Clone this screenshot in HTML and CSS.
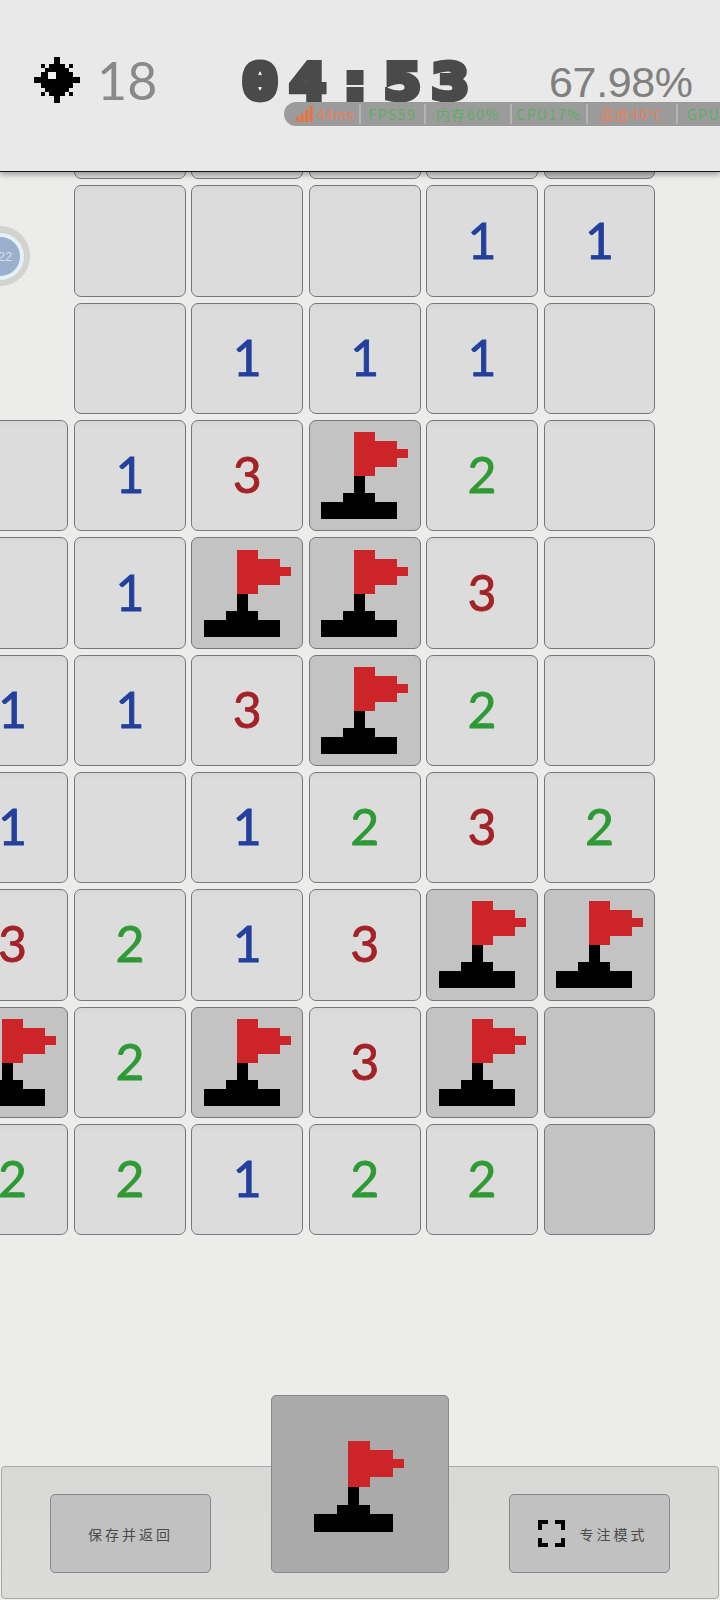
FILE: index.html
```html
<!DOCTYPE html>
<html lang="zh">
<head>
<meta charset="utf-8">
<title>Minesweeper</title>
<link rel="stylesheet" href="styles.css">
</head>
<body>
<svg class="defs" width="0" height="0" aria-hidden="true">
  <symbol id="flag" viewBox="0 0 8 10" preserveAspectRatio="none">
    <path fill="#cc2428" d="M3 0h2v1h2v1h1v1H7v1H5v1H3z"/>
    <path fill="#000" d="M3 5h1v2h1v1h2v2H0V8h2V7h1z"/>
  </symbol>
</svg>
<div class="app">
  <header class="top">
    <div class="stats">
      <div class="mines">
        <svg class="mine" viewBox="0 0 136 136" shape-rendering="crispEdges" aria-hidden="true">
          <path fill="#000" d="M60 0h16v20h16v12h12v12h12v16h20v16h-20v16h-12v12H92v12H76v20H60v-20H44v-12H32V92H20V76H0V60h20V44h12V32h12V20h16z"/>
          <path fill="#000" d="M20 20h12v12H20zM104 20h12v12h-12zM20 104h12v12H20zM104 104h12v12h-12z"/>
          <path fill="#f2f2f2" d="M40 44h24v20H40z"/>
        </svg>
        <span class="mine-count">18</span>
      </div>
      <div class="timer"><span class="timer-text">04:53</span></div>
      <div class="percent">67.98%</div>
    </div>
    <div class="perf">
      <span class="perf-item warn">
        <svg class="bars" viewBox="0 0 17 16" aria-hidden="true"><path fill="#f0703c" d="M0 11h3v5H0zM4.500 8h3v8h-3zM9 4h3v12H9zM13.500 0h3v16h-3z"/></svg>
        <span>44ms</span>
      </span>
      <span class="perf-item ok">FPS59</span>
      <span class="perf-item ok">内存60%</span>
      <span class="perf-item ok">CPU17%</span>
      <span class="perf-item warn">温度40℃</span>
      <span class="perf-item ok">GPU27%</span>
    </div>
  </header>

  <main class="board">
    <div class="grid">
      <div class="cell none"></div><div class="cell"></div><div class="cell"></div><div class="cell"></div><div class="cell"></div><div class="cell dark"></div>

      <div class="cell none"></div><div class="cell"></div><div class="cell"></div><div class="cell"></div><div class="cell n1">1</div><div class="cell n1">1</div>

      <div class="cell none"></div><div class="cell"></div><div class="cell n1">1</div><div class="cell n1">1</div><div class="cell n1">1</div><div class="cell"></div>

      <div class="cell"></div><div class="cell n1">1</div><div class="cell n3">3</div><div class="cell dark"><svg class="flag"><use href="#flag"/></svg></div><div class="cell n2">2</div><div class="cell"></div>

      <div class="cell"></div><div class="cell n1">1</div><div class="cell dark"><svg class="flag"><use href="#flag"/></svg></div><div class="cell dark"><svg class="flag"><use href="#flag"/></svg></div><div class="cell n3">3</div><div class="cell"></div>

      <div class="cell n1">1</div><div class="cell n1">1</div><div class="cell n3">3</div><div class="cell dark"><svg class="flag"><use href="#flag"/></svg></div><div class="cell n2">2</div><div class="cell"></div>

      <div class="cell n1">1</div><div class="cell"></div><div class="cell n1">1</div><div class="cell n2">2</div><div class="cell n3">3</div><div class="cell n2">2</div>

      <div class="cell n3">3</div><div class="cell n2">2</div><div class="cell n1">1</div><div class="cell n3">3</div><div class="cell dark"><svg class="flag"><use href="#flag"/></svg></div><div class="cell dark"><svg class="flag"><use href="#flag"/></svg></div>

      <div class="cell dark"><svg class="flag"><use href="#flag"/></svg></div><div class="cell n2">2</div><div class="cell dark"><svg class="flag"><use href="#flag"/></svg></div><div class="cell n3">3</div><div class="cell dark"><svg class="flag"><use href="#flag"/></svg></div><div class="cell dark"></div>

      <div class="cell n2">2</div><div class="cell n2">2</div><div class="cell n1">1</div><div class="cell n2">2</div><div class="cell n2">2</div><div class="cell dark"></div>
    </div>
    <div class="ball"><span class="ball-core"><span class="ball-text">22</span></span></div>
  </main>

  <footer class="bar">
    <button class="btn" type="button"><span class="btn-label">保存并返回</span></button>
    <button class="flag-btn" type="button"><svg class="flag-big"><use href="#flag"/></svg></button>
    <button class="btn btn-focus" type="button">
      <svg class="focus-icon" viewBox="0 0 27 27" aria-hidden="true"><path fill="none" stroke="#000" stroke-width="4" d="M10 2H2V10M17 2h8V10M2 18v7H10M25 18v7H17"/></svg>
      <span class="btn-label">专注模式</span>
    </button>
  </footer>
</div>
</body>
</html>
```
FILE: styles.css
```css
* { box-sizing: border-box; }
html, body { margin: 0; padding: 0; height: 100%; }
body { overflow: hidden; background: #ecedeb; font-family: "Liberation Sans", "Noto Sans CJK SC", sans-serif; }
.defs { position: absolute; }
.app { height: 1600px; display: flex; flex-direction: column; }

.top {
  position: relative; z-index: 2; height: 172px; flex: none;
  background: #e9e9e9; border-bottom: 1px solid #111;
  box-shadow: 0 3px 5px rgba(0,0,0,.3);
  padding-top: 57px;
}
.stats { display: flex; align-items: center; padding-left: 34px; height: 46px; }
.mines { display: flex; align-items: center; width: 207px; flex: none; }
.mine { width: 46px; height: 46px; flex: none; }
.mine-count { margin-left: 17px; font: 52px/46px Lato, sans-serif; color: #8a8a8a; }
.timer { width: 308px; flex: none; height: 46px; }
.timer-text {
  display: inline-block; transform: scaleX(1.2); transform-origin: left center;
  margin-left: 1px;
  font: bold 50px/51px "DejaVu Sans Mono", monospace; letter-spacing: 9.500px; color: #4a4a4a;
  -webkit-text-stroke: 6px #4a4a4a;
}
.percent { font-size: 43px; line-height: 46px; color: #808080; letter-spacing: -.35px; margin-top: 4px; }

.perf {
  position: absolute; top: 102px; left: 284px; right: 0; height: 24px;
  background: #9b9b9b; border-radius: 12px 0 0 12px;
  display: grid; grid-template-columns: 77px 65px 86px 76px 90px 1fr; align-items: center; overflow: hidden; white-space: nowrap;
  font: 14px/20px "Noto Sans CJK SC", sans-serif; letter-spacing: 1.500px;
}
.perf-item { display: flex; align-items: center; justify-content: center; gap: 4px; height: 20px; border-right: 2px solid #b4b4b4; }
.perf-item:first-child { justify-content: flex-start; padding-left: 12px; letter-spacing: .5px; }
.perf-item:last-child { border-right: 0; justify-content: flex-start; padding-left: 9px; }
.ok { color: #5dae62; }
.warn { color: #e8805c; }
.bars { width: 17px; height: 16px; flex: none; }

.board { flex: 1; min-height: 0; margin-top: -104px; position: relative; overflow: hidden; }
.grid {
  display: grid; grid-template-columns: repeat(6, 111.800px); grid-auto-rows: 111.400px; gap: 5.950px 5.600px;
  margin-left: -43.400px;
}
.cell {
  display: flex; align-items: center; justify-content: center;
  background: linear-gradient(#d7d7d7, #dcdcdc 6%);
  border: 1px solid #777; border-radius: 7px;
  font: 50px/1 Lato, sans-serif; -webkit-text-stroke: .8px currentColor; padding-bottom: 3px;
}
.dark { background: #c3c3c3; padding-bottom: 0; }
.none { visibility: hidden; }
.n1 { color: #22409c; }
.n2 { color: #2f9a35; }
.n3 { color: #a32226; }
.flag { width: 87px; height: 87px; shape-rendering: crispEdges; }

.ball {
  position: absolute; left: -30px; top: 158px; width: 60px; height: 60px; border-radius: 50%;
  background: #d2d3cf; display: flex; align-items: center; justify-content: center;
}
.ball-core { width: 47px; height: 47px; border-radius: 50%; background: #9ab0cc; border: 4px solid #e6f1f7; display: flex; align-items: center; justify-content: center; }
.ball-text { font-size: 13px; color: #d7e0ea; margin-left: 10px; }

.bar {
  flex: none; height: 133px; margin: 0 1px 1px; padding: 0 48px 25px;
  background: linear-gradient(#d8d8d6, #dbdbd9);
  border: 1px solid #aaa; border-radius: 4px;
  display: flex; align-items: flex-end; justify-content: space-between;
}
.btn {
  width: 161px; height: 79px; flex: none;
  background: #c1c1c1; border: 1px solid #888; border-radius: 5px; padding: 0;
  display: flex; align-items: center; justify-content: center; gap: 15px;
}
.btn-focus { padding-left: 6px; }
.btn-label { font: 14px/1 "Noto Sans CJK SC", sans-serif; letter-spacing: 3px; color: #4a4a4a; }
.focus-icon { width: 27px; height: 27px; flex: none; }
.flag-btn {
  width: 178px; height: 178px; flex: none; padding: 0 2px 0 0;
  background: #aaa; border: 1px solid #888; border-radius: 5px;
  display: flex; align-items: center; justify-content: center;
}
.flag-big { width: 90px; height: 91px; margin-top: 4px; shape-rendering: crispEdges; }
```
